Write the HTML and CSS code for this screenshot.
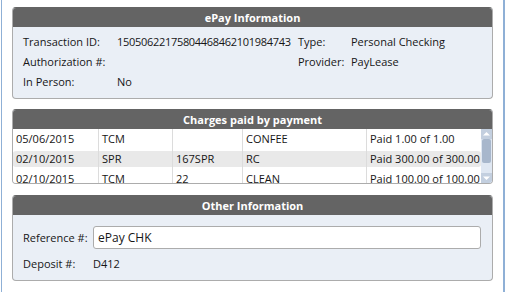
FILE: index.html
```html
<!DOCTYPE html>
<html>
<head>
<meta charset="utf-8">
<link rel="stylesheet" href="styles.css">
</head>
<body>
<div class="frame">
  <section class="panel">
    <div class="panel-head">ePay Information</div>
    <div class="info-grid">
      <span>Transaction ID:</span><span class="num">15050622175804468462101984743</span><span>Type:</span><span>Personal Checking</span>
      <span>Authorization #:</span><span></span><span>Provider:</span><span>PayLease</span>
      <span>In Person:</span><span>No</span><span></span><span></span>
    </div>
  </section>

  <section class="panel panel-charges">
    <div class="panel-head">Charges paid by payment</div>
    <div class="list">
      <div class="rows">
        <div class="row"><span>05/06/2015</span><span>TCM</span><span></span><span>CONFEE</span><span>Paid 1.00 of 1.00</span></div>
        <div class="row selected"><span>02/10/2015</span><span>SPR</span><span>167SPR</span><span>RC</span><span>Paid 300.00 of 300.00</span></div>
        <div class="row"><span>02/10/2015</span><span>TCM</span><span>22</span><span>CLEAN</span><span>Paid 100.00 of 100.00</span></div>
      </div>
      <div class="scrollbar">
        <div class="sb-btn"><svg width="11" height="10" viewBox="0 0 11 10"><path d="M2 6.5 L5.5 3 L9 6.5 Z" fill="#ffffff"/></svg></div>
        <div class="sb-thumb"></div>
        <div class="sb-track"></div>
        <div class="sb-btn"><svg width="11" height="10" viewBox="0 0 11 10"><path d="M2 3.5 L5.5 7 L9 3.5 Z" fill="#ffffff"/></svg></div>
      </div>
    </div>
  </section>

  <section class="panel panel-other">
    <div class="panel-head">Other Information</div>
    <div class="other-body">
      <div class="ref-row"><span class="lbl">Reference #:</span><div class="input">ePay CHK</div></div>
      <div class="dep-row"><span class="lbl">Deposit #:</span><span>D412</span></div>
    </div>
  </section>
</div>
</body>
</html>
```
FILE: styles.css
```css
html, body {
  margin: 0;
  padding: 0;
  background: #ffffff;
}
body {
  font-family: "Open Sans", "Noto Sans", sans-serif;
  font-size: 11px;
  color: #161616;
}
.frame {
  margin-left: 1px;
  width: 504px;
  height: 292px;
  border-left: 1px solid #8fb0d6;
  border-right: 2px solid #8fb0d6;
  padding: 7px 10px 0 10px;
  box-sizing: border-box;
}
.panel {
  border: 1px solid #acacac;
  border-top-color: #646464;
  border-radius: 4px;
  background: #eaeff6;
  overflow: hidden;
}
.panel-head {
  background: #646464;
  color: #ffffff;
  font-weight: 700;
  text-align: center;
  height: 19px;
  line-height: 19px;
}
.info-grid {
  display: grid;
  grid-template-columns: 94px 181px 53px 1fr;
  grid-auto-rows: 20px;
  align-items: center;
  padding: 4px 10px 7px 10px;
  white-space: nowrap;
}
.num {
  letter-spacing: -0.3px;
}
.panel-charges {
  margin-top: 10px;
}
.list {
  display: flex;
  height: 54px;
  background: #ffffff;
  overflow: hidden;
}
.rows {
  flex: 1;
}
.row {
  display: grid;
  grid-template-columns: 85px 74px 70px 124px 1fr;
  height: 20px;
  box-sizing: border-box;
  border-top: 2px solid transparent;
  border-bottom: 2px solid transparent;
  background-clip: padding-box;
  border-radius: 4px;
  white-space: nowrap;
}
.row.selected {
  background-color: #e9e9e9;
}
.row span {
  padding-left: 3px;
  line-height: 15px;
  border-left: 1px solid #dcdcdc;
  margin: -2px 0;
  padding-top: 2px;
  overflow: hidden;
}
.row span:first-child {
  border-left: none;
}
.scrollbar {
  width: 11px;
  display: flex;
  flex-direction: column;
  background: #dfe7f2;
}
.sb-btn {
  height: 10px;
  background: #c3cfdf;
  display: flex;
  align-items: center;
  justify-content: center;
}
.sb-btn svg {
  display: block;
}
.sb-thumb {
  height: 24px;
  margin: 0 1px;
  background: #a8b7cc;
  border-radius: 2px;
}
.sb-track {
  flex: 1;
}
.panel-other {
  margin-top: 11px;
}
.other-body {
  padding: 11px 10px 7px 10px;
}
.ref-row {
  display: flex;
  align-items: center;
}
.lbl {
  width: 70px;
  flex: none;
}
.input {
  width: 388px;
  height: 23px;
  box-sizing: border-box;
  border: 1px solid #acacac;
  border-radius: 3px;
  background: #ffffff;
  padding-left: 4px;
  line-height: 21px;
  font-size: 12px;
}
.dep-row {
  display: flex;
  align-items: center;
  height: 20px;
  margin-top: 4px;
}
```
